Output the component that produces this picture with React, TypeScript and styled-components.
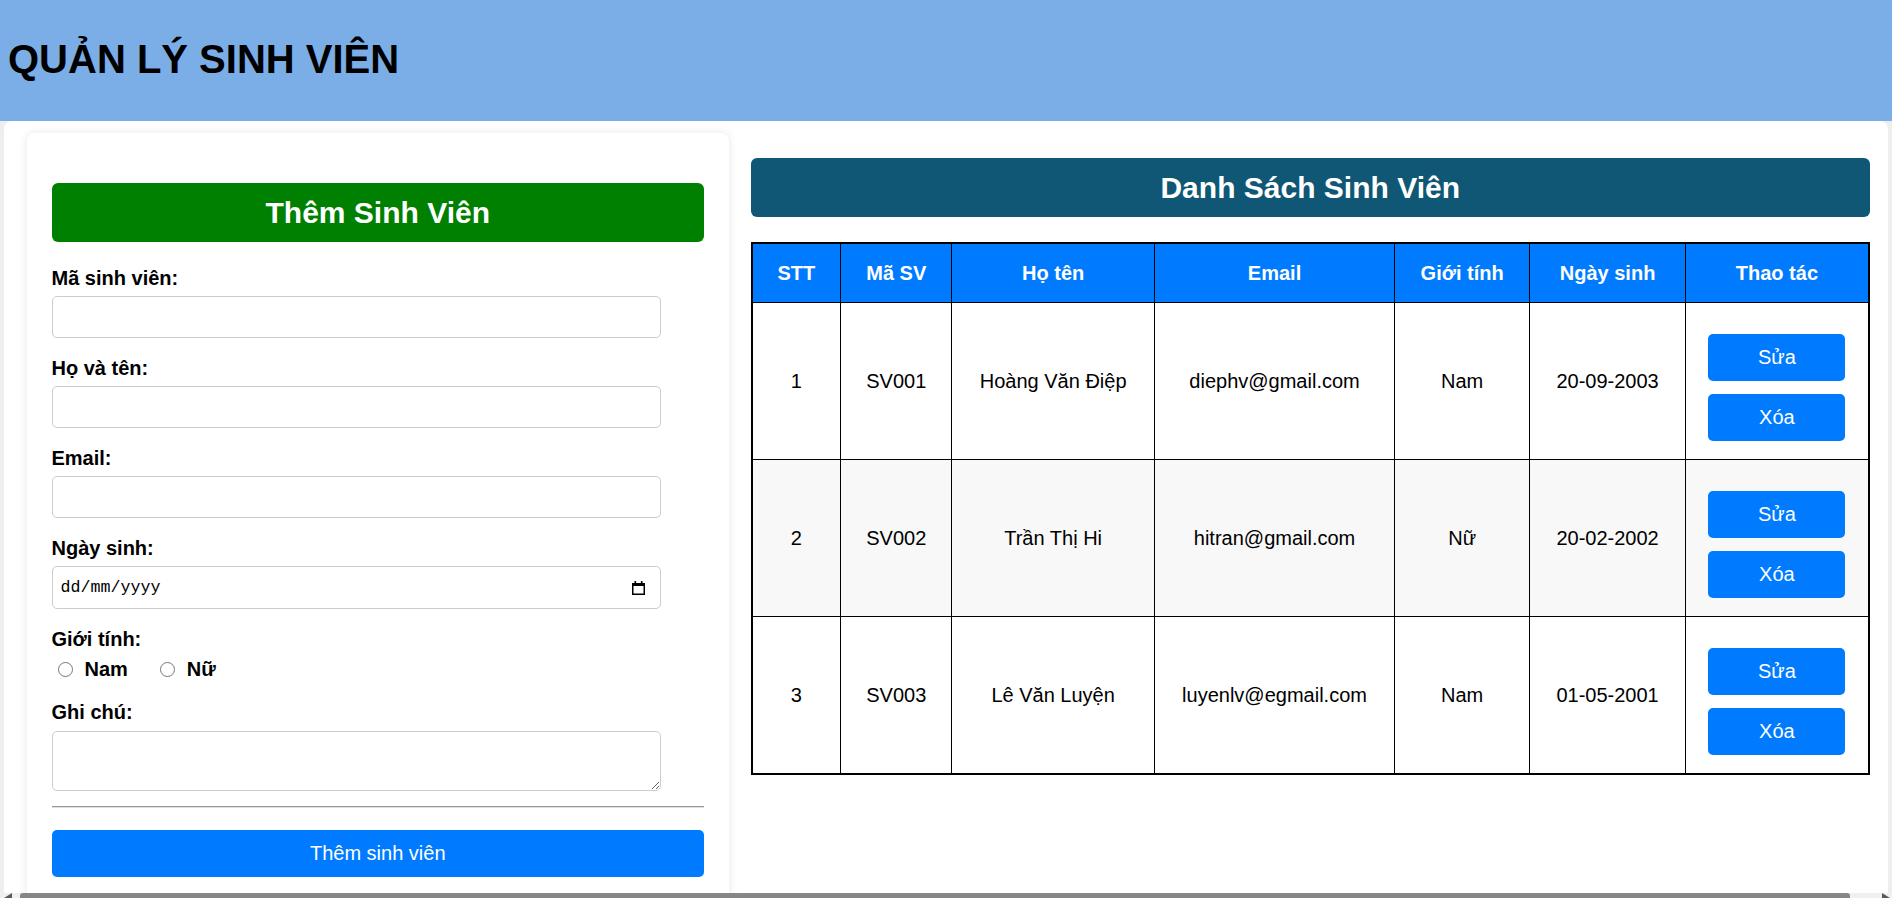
import styled, { createGlobalStyle } from 'styled-components';

const GlobalStyle = createGlobalStyle`
  html, body {
    margin: 0;
    padding: 0;
  }
  body {
    background-color: #eeeeee;
    font-family: 'Liberation Sans', Arial, sans-serif;
    color: #000;
    overflow: hidden;
  }
  * {
    box-sizing: border-box;
  }
`;

const Page = styled.div`
  height: 100vh;
  display: flex;
  flex-direction: column;
  overflow: hidden;
`;

const Header = styled.header`
  flex: none;
  height: 121px;
  display: flex;
  align-items: center;
  padding: 0 0 4px 8px;
  background-color: #7baee7;
`;

const Title = styled.h1`
  margin: 0;
  font-size: 40px;
  line-height: 46px;
  font-weight: bold;
`;

const Main = styled.main`
  flex: 1;
  min-height: 0;
  overflow: hidden;
  margin: 0 4px;
  padding: 12px 20px 0 22.5px;
  display: grid;
  grid-template-columns: 702.5px 1fr;
  column-gap: 21.5px;
  align-items: start;
  background-color: #fff;
  border-radius: 8px 8px 0 0;
`;

const FormCard = styled.section`
  padding: 25px;
  background-color: #fff;
  border-radius: 8px;
  box-shadow: 0 0 10px rgba(0, 0, 0, 0.1);
`;

const PanelTitle = styled.h2<{ $tone: 'green' | 'navy' }>`
  margin: ${(p) => (p.$tone === 'green' ? '25px 0' : '0 0 25px')};
  padding: 12.5px 10px;
  font-size: 30px;
  line-height: 34px;
  font-weight: bold;
  text-align: center;
  color: #fff;
  border-radius: 6px;
  background-color: ${(p) => (p.$tone === 'green' ? '#008000' : '#0f5775')};
`;

const Label = styled.label`
  display: block;
  margin-bottom: 6.25px;
  font-size: 20px;
  line-height: 23px;
  font-weight: bold;
`;

const TextInput = styled.input`
  display: block;
  width: 609px;
  height: 42px;
  margin: 0 0 18.75px;
  padding: 0 10px;
  font-family: 'Liberation Sans', Arial, sans-serif;
  font-size: 16.67px;
  border: 1px solid #cccccc;
  border-radius: 5px;
  outline: none;
`;

const DateBox = styled.div`
  width: 609px;
  height: 43px;
  margin: 0 0 18.75px;
  padding: 0 15px 0 8px;
  display: flex;
  align-items: center;
  border: 1px solid #cccccc;
  border-radius: 5px;
`;

const DateText = styled.input`
  flex: 1;
  min-width: 0;
  padding: 0;
  border: 0;
  outline: none;
  font-family: 'Liberation Mono', 'DejaVu Sans Mono', monospace;
  font-size: 16.67px;
  color: #000;

  &::placeholder {
    color: #000;
    opacity: 1;
  }
`;

const RadioRow = styled.div`
  height: 25px;
  margin: 0 0 19px;
  padding-left: 6px;
  display: flex;
  align-items: center;
  gap: 32px;
`;

const RadioOption = styled.label`
  display: flex;
  align-items: center;
  gap: 12px;
  font-size: 20px;
  line-height: 23px;
  font-weight: bold;

  input {
    width: 15px;
    height: 15px;
    margin: 0;
  }
`;

const NoteArea = styled.textarea`
  display: block;
  width: 609px;
  height: 60px;
  margin: 0;
  padding: 10px;
  font-family: 'Liberation Sans', Arial, sans-serif;
  font-size: 16.67px;
  border: 1px solid #cccccc;
  border-radius: 5px;
  outline: none;
`;

const Divider = styled.hr`
  margin: 15.5px 0 22px;
  height: 0;
  border: 0;
  border-top: 1px solid #9a9a9a;
  border-bottom: 1px solid #dedede;
`;

const BlueButton = styled.button<{ $wide?: boolean }>`
  display: block;
  width: ${(p) => (p.$wide ? '100%' : '137px')};
  height: 47px;
  margin: 0 auto;
  padding: 0;
  border: 0;
  border-radius: 5px;
  background-color: #007bff;
  color: #fff;
  font-family: 'Liberation Sans', Arial, sans-serif;
  font-size: 20px;
  cursor: pointer;
`;

const ListPanel = styled.section`
  padding-top: 25px;
`;

const Table = styled.table`
  width: 100%;
  table-layout: fixed;
  border-collapse: collapse;
  border: 2px solid #000;
  font-size: 20px;
  line-height: 23px;
`;

const HeadCell = styled.th`
  padding: 17.5px 8px;
  border: 1px solid #000;
  background-color: #007bff;
  color: #fff;
  font-weight: bold;
  text-align: center;
`;

const Row = styled.tr<{ $shaded?: boolean }>`
  background-color: ${(p) => (p.$shaded ? '#f8f8f8' : '#fff')};
`;

const Cell = styled.td`
  padding: 18.5px 8px;
  border: 1px solid #000;
  text-align: center;
  vertical-align: middle;
`;

const Actions = styled.div`
  margin-top: 12.5px;
  display: flex;
  flex-direction: column;
  gap: 12.5px;
`;

const ScrollTrack = styled.div`
  flex: none;
  height: 5px;
  padding: 0 2px 0 4px;
  display: flex;
  align-items: flex-end;
  background-color: #f0f0f0;
`;

const ScrollArrow = styled.span<{ $side: 'left' | 'right' }>`
  width: 0;
  height: 0;
  border-style: solid;
  border-width: 0 ${(p) => (p.$side === 'left' ? '0 5px 8px' : '8px 5px 0')};
  border-color: transparent transparent #5a5a5a;
`;

const ScrollThumb = styled.div`
  flex: 1;
  height: 5px;
  margin: 0 32px 0 8px;
  border-radius: 3px 3px 0 0;
  background-color: #868686;
`;

const columns = [89.3, 111, 202.7, 240.1, 135.2, 155.6, 183.6];
const headers = ['STT', 'Mã SV', 'Họ tên', 'Email', 'Giới tính', 'Ngày sinh', 'Thao tác'];

const students = [
  { id: 'SV001', name: 'Hoàng Văn Điệp', email: 'diephv@gmail.com', gender: 'Nam', dob: '20-09-2003' },
  { id: 'SV002', name: 'Trần Thị Hi', email: 'hitran@gmail.com', gender: 'Nữ', dob: '20-02-2002' },
  { id: 'SV003', name: 'Lê Văn Luyện', email: 'luyenlv@egmail.com', gender: 'Nam', dob: '01-05-2001' },
];

const CalendarIcon = () => (
  <svg width='13' height='14' viewBox='0 0 13 14' fill='#000'>
    <rect x='2.5' y='0' width='1.6' height='3' />
    <rect x='8.9' y='0' width='1.6' height='3' />
    <rect x='0.75' y='2.75' width='11.5' height='10.5' fill='none' stroke='#000' strokeWidth='1.5' />
    <rect x='0.75' y='2' width='11.5' height='3' />
  </svg>
);

export default function App() {
  return (
    <Page>
      <GlobalStyle />
      <Header>
        <Title>QUẢN LÝ SINH VIÊN</Title>
      </Header>

      <Main>
        <FormCard>
          <PanelTitle $tone='green'>Thêm Sinh Viên</PanelTitle>

          <Label htmlFor='ma-sv'>Mã sinh viên:</Label>
          <TextInput id='ma-sv' type='text' />

          <Label htmlFor='ho-ten'>Họ và tên:</Label>
          <TextInput id='ho-ten' type='text' />

          <Label htmlFor='email'>Email:</Label>
          <TextInput id='email' type='email' />

          <Label htmlFor='ngay-sinh'>Ngày sinh:</Label>
          <DateBox>
            <DateText id='ngay-sinh' type='text' placeholder='dd/mm/yyyy' />
            <CalendarIcon />
          </DateBox>

          <Label>Giới tính:</Label>
          <RadioRow>
            <RadioOption>
              <input type='radio' name='gioi-tinh' value='Nam' />
              Nam
            </RadioOption>
            <RadioOption>
              <input type='radio' name='gioi-tinh' value='Nữ' />
              Nữ
            </RadioOption>
          </RadioRow>

          <Label htmlFor='ghi-chu'>Ghi chú:</Label>
          <NoteArea id='ghi-chu' />

          <Divider />
          <BlueButton $wide type='button'>
            Thêm sinh viên
          </BlueButton>
        </FormCard>

        <ListPanel>
          <PanelTitle $tone='navy'>Danh Sách Sinh Viên</PanelTitle>
          <Table>
            <colgroup>
              {columns.map((w, i) => (
                <col key={i} style={{ width: w }} />
              ))}
            </colgroup>
            <thead>
              <tr>
                {headers.map((h) => (
                  <HeadCell key={h}>{h}</HeadCell>
                ))}
              </tr>
            </thead>
            <tbody>
              {students.map((s, index) => (
                <Row key={s.id} $shaded={index % 2 === 1}>
                  <Cell>{index + 1}</Cell>
                  <Cell>{s.id}</Cell>
                  <Cell>{s.name}</Cell>
                  <Cell>{s.email}</Cell>
                  <Cell>{s.gender}</Cell>
                  <Cell>{s.dob}</Cell>
                  <Cell>
                    <Actions>
                      <BlueButton type='button'>Sửa</BlueButton>
                      <BlueButton type='button'>Xóa</BlueButton>
                    </Actions>
                  </Cell>
                </Row>
              ))}
            </tbody>
          </Table>
        </ListPanel>
      </Main>

      <ScrollTrack>
        <ScrollArrow $side='left' />
        <ScrollThumb />
        <ScrollArrow $side='right' />
      </ScrollTrack>
    </Page>
  );
}
